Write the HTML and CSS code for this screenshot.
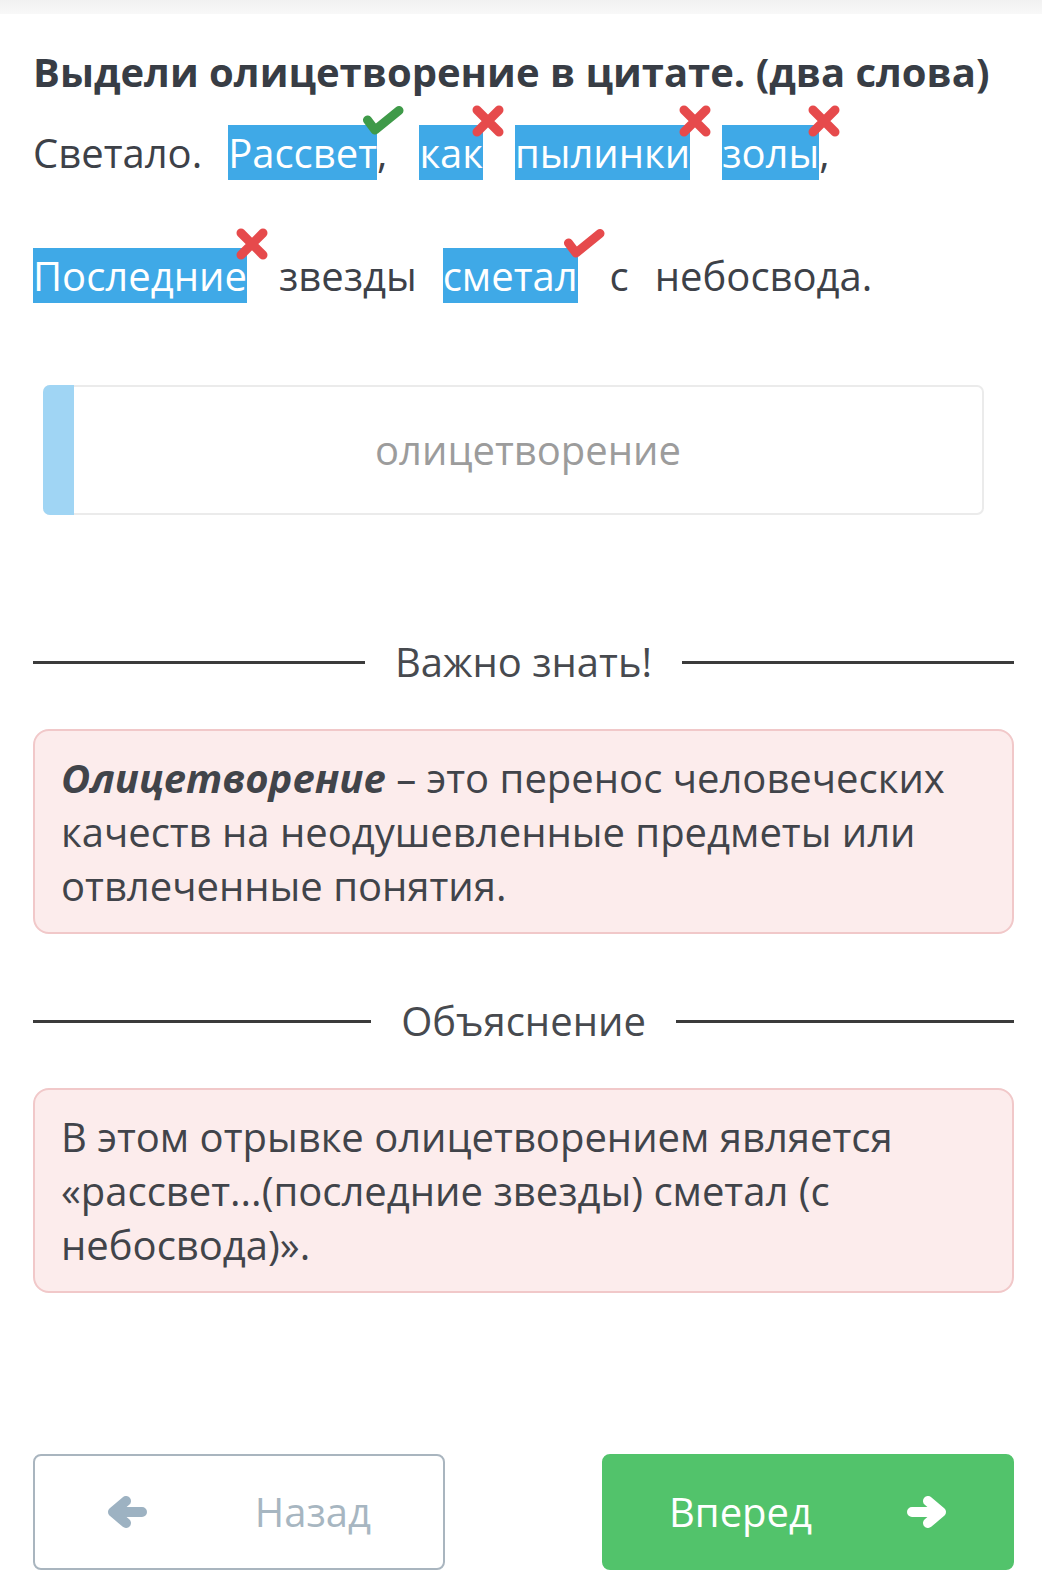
FILE: index.html
```html
<!DOCTYPE html>
<html lang="ru">
<head>
<meta charset="utf-8">
<title>Олицетворение</title>
<link rel="stylesheet" href="styles.css">
</head>
<body>
<div class="topbar"></div>
<main class="page">
  <h1 class="title">Выдели олицетворение в цитате. (два слова)</h1>

  <div class="quote">
    <span class="tok">Светало.</span>
    <span class="tok tok-hl"><span class="hl">Рассвет<svg class="mark check" viewBox="0 0 44 34"><polyline points="6.5,15 14,25 38,5.5" stroke="#3f9a49"/></svg></span>,</span>
    <span class="tok tok-hl"><span class="hl">как<svg class="mark cross" viewBox="0 0 32 32"><path d="M5 5L27 27M27 5L5 27" stroke="#e64a4c"/></svg></span></span>
    <span class="tok tok-hl"><span class="hl">пылинки<svg class="mark cross" viewBox="0 0 32 32"><path d="M5 5L27 27M27 5L5 27" stroke="#e64a4c"/></svg></span></span>
    <span class="tok tok-hl"><span class="hl">золы<svg class="mark cross" viewBox="0 0 32 32"><path d="M5 5L27 27M27 5L5 27" stroke="#e64a4c"/></svg></span>,</span>
    <span class="tok tok-hl"><span class="hl">Последние<svg class="mark cross" viewBox="0 0 32 32"><path d="M5 5L27 27M27 5L5 27" stroke="#e64a4c"/></svg></span></span>
    <span class="tok">звезды</span>
    <span class="tok tok-hl"><span class="hl">сметал<svg class="mark check" viewBox="0 0 44 34"><polyline points="6.5,15 14,25 38,5.5" stroke="#e64a4c"/></svg></span></span>
    <span class="tok">с</span>
    <span class="tok">небосвода.</span>
  </div>

  <div class="answer">
    <span class="answer-bar"></span>
    <span class="answer-text">олицетворение</span>
  </div>

  <div class="divider"><span class="divider-text">Важно знать!</span></div>

  <div class="note">
    <p><b><i>Олицетворение</i></b> – это перенос человеческих качеств на неодушевленные предметы или отвлеченные понятия.</p>
  </div>

  <div class="divider divider-second"><span class="divider-text">Объяснение</span></div>

  <div class="note">
    <p>В этом отрывке олицетворением является «рассвет...(последние звезды) сметал (с небосвода)».</p>
  </div>

  <div class="nav">
    <button class="btn btn-back" type="button">
      <svg class="arrow" viewBox="0 0 40 32"><path d="M19 5L6 16L19 27M6 16H35" stroke="#9db2c2"/></svg>
      <span>Назад</span>
    </button>
    <button class="btn btn-next" type="button">
      <span>Вперед</span>
      <svg class="arrow" viewBox="0 0 40 32"><path d="M21 5L34 16L21 27M34 16H5" stroke="#ffffff"/></svg>
    </button>
  </div>
</main>
</body>
</html>
```

FILE: styles.css
```css
* {
  box-sizing: border-box;
}

html, body {
  margin: 0;
  padding: 0;
  background: #ffffff;
}

body {
  font-family: "Open Sans", "Noto Sans", sans-serif;
  color: #3d4148;
}

.topbar {
  height: 14px;
  background: linear-gradient(#f1f1f1, #f8f8f8);
}

.page {
  padding: 0 28px 0 33px;
}

.title {
  margin: 31px 0 0;
  font-size: 40px;
  line-height: 54px;
  font-weight: 700;
  color: #383d45;
  white-space: nowrap;
}

.quote {
  margin-top: 27px;
  display: flex;
  flex-wrap: wrap;
  column-gap: 26px;
  row-gap: 69px;
  font-size: 40px;
  line-height: 54px;
  color: #3d4148;
}

.tok {
  white-space: nowrap;
}

.tok-hl {
  margin-right: 6px;
}

.hl {
  position: relative;
  background: #3fa9e7;
  color: #ffffff;
}

.mark {
  position: absolute;
  fill: none;
  stroke-width: 9;
  stroke-linecap: round;
  stroke-linejoin: round;
}

.mark.check {
  width: 44px;
  height: 34px;
  right: -28px;
  top: -20px;
}

.mark.cross {
  width: 32px;
  height: 32px;
  right: -21px;
  top: -20px;
}

.answer {
  margin: 82px 30px 0 10px;
  height: 130px;
  display: flex;
  border: 2px solid #ebebeb;
  border-radius: 7px;
}

.answer-bar {
  width: 31px;
  margin: -2px 0 -2px -2px;
  background: #a0d5f4;
  border-radius: 7px 0 0 7px;
}

.answer-text {
  flex: 1;
  display: flex;
  align-items: center;
  justify-content: center;
  font-size: 40px;
  line-height: 54px;
  color: #9c9c9c;
}

.divider {
  margin-top: 120px;
  height: 54px;
  display: flex;
  align-items: center;
}

.divider::before,
.divider::after {
  content: "";
  flex: 1;
  height: 3px;
  background: #3b3b3b;
}

.divider-text {
  padding: 0 30px;
  font-size: 40px;
  line-height: 54px;
  color: #474a4f;
}

.divider-second {
  margin-top: 60px;
}

.note {
  margin-top: 40px;
  background: #fcecec;
  border: 2px solid #f1c8c9;
  border-radius: 16px;
  padding: 20px 26px 19px;
}

.note p {
  margin: 0;
  font-size: 40px;
  line-height: 54px;
  color: #41444a;
}

.nav {
  margin-top: 161px;
  display: flex;
  justify-content: space-between;
}

.btn {
  width: 412px;
  height: 116px;
  border-radius: 8px;
  display: flex;
  align-items: center;
  justify-content: space-between;
  font-family: "Open Sans", "Noto Sans", sans-serif;
  font-size: 40px;
  line-height: 54px;
  cursor: pointer;
}

.btn-back {
  background: #ffffff;
  border: 2px solid #a9b5bf;
  color: #a7b6c1;
  padding: 0 72px;
}

.btn-next {
  background: #52c36b;
  border: 2px solid #52c36b;
  color: #ffffff;
  padding: 0 65px;
}

.arrow {
  width: 40px;
  height: 32px;
  fill: none;
  stroke-width: 10;
  stroke-linecap: round;
  stroke-linejoin: round;
}
```
